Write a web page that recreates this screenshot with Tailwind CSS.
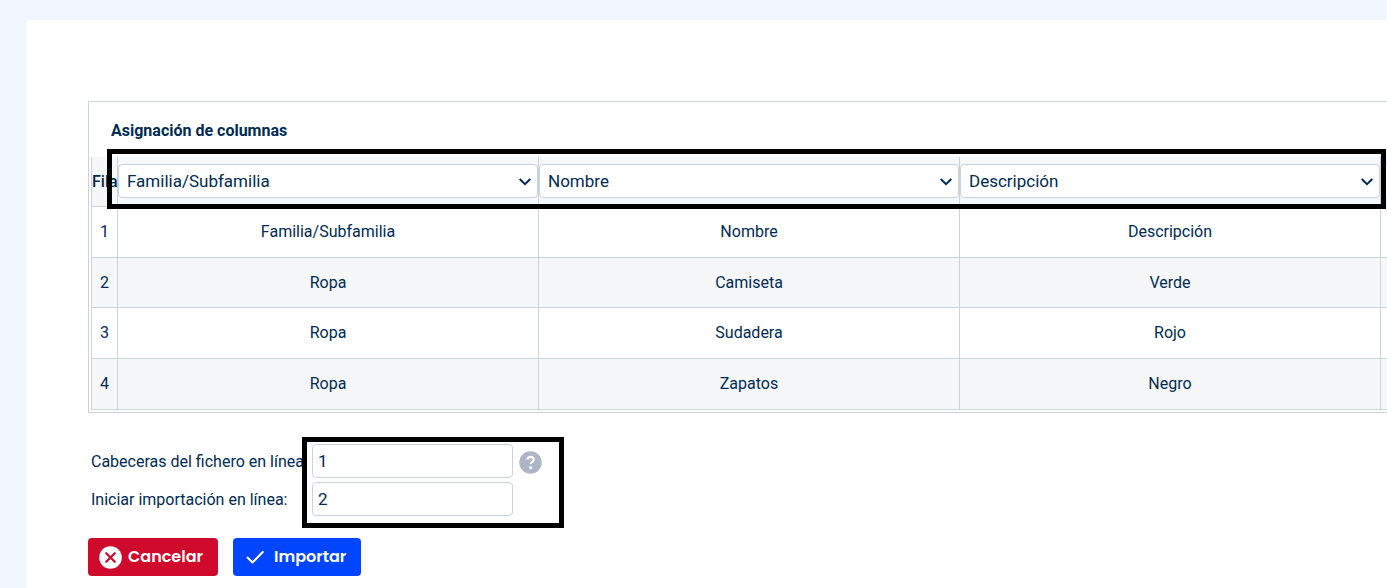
<!DOCTYPE html>
<html lang="es">
<head>
<meta charset="utf-8">
<meta name="viewport" content="width=device-width, initial-scale=1">
<title>Asignación de columnas</title>
<script src="https://cdn.jsdelivr.net/npm/@tailwindcss/browser@4"></script>
</head>
<body class="min-h-screen overflow-x-hidden bg-[#f2f7ff] pt-5 pl-[26px] font-['Roboto',sans-serif] text-base text-[#002b54]">
<main class="min-h-[568px] rounded-tl bg-white pt-[81px] pb-3 pl-[62px]">
  <section class="overflow-hidden border-y border-l border-[#c9d3dc] pt-4 pb-0.5 pl-0.5">
    <h1 class="px-5 pb-3.5 text-base leading-[25px] font-bold">Asignación de columnas</h1>
    <div class="relative">
      <table class="w-[1710px] table-fixed border-separate border-spacing-0 text-center [&_td]:border-b [&_td]:border-l [&_td]:border-[#c9d3dc] [&_td]:p-0 [&_th]:border-b [&_th]:border-l [&_th]:border-[#c9d3dc] [&_th]:p-0">
        <colgroup><col class="w-[26px]"><col class="w-[421px]"><col class="w-[421px]"><col class="w-[421px]"><col class="w-[421px]"></colgroup>
        <thead>
          <tr class="h-[50px] bg-[#f6f7f9]">
            <th class="font-medium" scope="col">Fila</th>
            <th scope="col"><div class="relative mb-0.5"><select aria-label="Columna 1" class="block h-[34px] w-full appearance-none rounded border border-[#c9d3dc] bg-white px-2 pt-0.5 text-[17px] font-normal"><option>Familia/Subfamilia</option></select><svg class="pointer-events-none absolute top-3.5 right-[7px] h-2 w-3" viewBox="0 0 12 8" fill="none" stroke="currentColor" stroke-width="2"><path d="M.7 1 6 6.2 11.3 1"/></svg></div></th>
            <th scope="col"><div class="relative mb-0.5"><select aria-label="Columna 2" class="block h-[34px] w-full appearance-none rounded border border-[#c9d3dc] bg-white px-2 pt-0.5 text-[17px] font-normal"><option>Nombre</option></select><svg class="pointer-events-none absolute top-3.5 right-[7px] h-2 w-3" viewBox="0 0 12 8" fill="none" stroke="currentColor" stroke-width="2"><path d="M.7 1 6 6.2 11.3 1"/></svg></div></th>
            <th scope="col"><div class="relative mb-0.5"><select aria-label="Columna 3" class="block h-[34px] w-full appearance-none rounded border border-[#c9d3dc] bg-white px-2 pt-0.5 text-[17px] font-normal"><option>Descripción</option></select><svg class="pointer-events-none absolute top-3.5 right-[7px] h-2 w-3" viewBox="0 0 12 8" fill="none" stroke="currentColor" stroke-width="2"><path d="M.7 1 6 6.2 11.3 1"/></svg></div></th>
            <th scope="col"><div class="mb-0.5"><select aria-label="Columna 4" class="block h-[34px] w-full appearance-none rounded border border-[#c9d3dc] bg-white px-2"><option></option></select></div></th>
          </tr>
        </thead>
        <tbody>
          <tr class="h-[51px]"><td>1</td><td>Familia/Subfamilia</td><td>Nombre</td><td>Descripción</td><td></td></tr>
          <tr class="h-[50px] bg-[#f6f7f9]"><td>2</td><td>Ropa</td><td>Camiseta</td><td>Verde</td><td></td></tr>
          <tr class="h-[51px]"><td>3</td><td>Ropa</td><td>Sudadera</td><td>Rojo</td><td></td></tr>
          <tr class="h-[51px] bg-[#f6f7f9]"><td>4</td><td>Ropa</td><td>Zapatos</td><td>Negro</td><td></td></tr>
        </tbody>
      </table>
      <div class="pointer-events-none absolute -top-2 left-4 h-[60px] w-[1279px] border-5 border-black"></div>
    </div>
  </section>

  <form class="mt-[31px]">
    <div class="relative grid w-fit grid-cols-[221px_201px_auto] items-center gap-y-1 pl-[3px]">
      <label for="cabeceras" class="pt-0.5">Cabeceras del fichero en línea:</label>
      <input id="cabeceras" type="text" value="1" class="h-[34px] rounded border border-[#c9d3dc] bg-white px-[5px] text-[17px]">
      <button type="button" aria-label="Ayuda" class="ml-1.5 pt-0.5"><svg class="size-[23px]" viewBox="0 0 23 23"><circle cx="11.5" cy="11.5" r="11.2" fill="#adb5c7"/><path d="M8.4 8.7C8.6 6.8 9.9 5.9 11.6 5.9c1.8 0 3.1 1 3.1 2.6 0 2.3-3 2.3-3 4.6" fill="none" stroke="#fff" stroke-width="2.2"/><circle cx="11.6" cy="16.6" r="1.6" fill="#fff"/></svg></button>
      <label for="inicio" class="pt-0.5">Iniciar importación en línea:</label>
      <input id="inicio" type="text" value="2" class="h-[34px] rounded border border-[#c9d3dc] bg-white px-[5px] text-[17px]">
      <div class="pointer-events-none absolute -top-[7px] left-[214px] h-[91px] w-[262px] border-5 border-black"></div>
    </div>
    <div class="mt-[22px] flex gap-[15px] font-['Poppins','Inter',sans-serif] text-base font-semibold text-white">
      <button type="button" class="flex h-[38px] w-[130px] items-center gap-1.5 rounded bg-[#cf0a2c] pl-[11px]"><svg class="size-[23px]" viewBox="0 0 23 23"><circle cx="11.5" cy="11.5" r="11.3" fill="#fff"/><path d="m7.2 7.2 8.6 8.6m0-8.6-8.6 8.6" stroke="#cf0a2c" stroke-width="2.2" stroke-linecap="round"/></svg><span>Cancelar</span></button>
      <button type="button" class="flex h-[38px] w-32 items-center gap-2.5 rounded bg-[#0045ff] pl-[13px]"><svg class="h-4 w-[18px]" viewBox="0 0 18 16" fill="none" stroke="#fff" stroke-width="2" stroke-linecap="round" stroke-linejoin="round"><path d="m1.5 8.5 5 5L16.8 3"/></svg><span>Importar</span></button>
    </div>
  </form>
</main>
</body>
</html>
